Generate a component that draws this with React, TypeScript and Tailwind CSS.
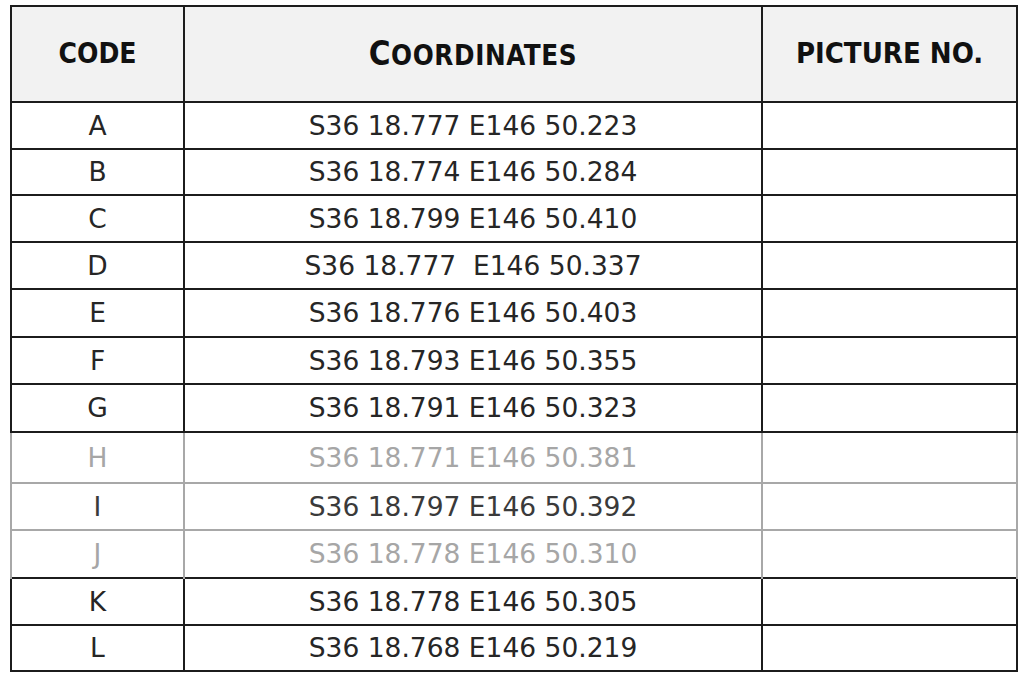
const rows = [
  { code: 'A', coords: 'S36 18.777 E146 50.223', h: 'h-[47px]' },
  { code: 'B', coords: 'S36 18.774 E146 50.284', h: 'h-[46px]' },
  { code: 'C', coords: 'S36 18.799 E146 50.410', h: 'h-[47px]' },
  { code: 'D', coords: 'S36 18.777  E146 50.337', h: 'h-[47px]' },
  { code: 'E', coords: 'S36 18.776 E146 50.403', h: 'h-[48px]' },
  { code: 'F', coords: 'S36 18.793 E146 50.355', h: 'h-[47px]' },
  { code: 'G', coords: 'S36 18.791 E146 50.323', h: 'h-[48px]' },
  { code: 'H', coords: 'S36 18.771 E146 50.381', h: 'h-[51px]', faded: 'light' },
  { code: 'I', coords: 'S36 18.797 E146 50.392', h: 'h-[47px]', faded: 'dark' },
  { code: 'J', coords: 'S36 18.778 E146 50.310', h: 'h-[48px]', faded: 'last' },
  { code: 'K', coords: 'S36 18.778 E146 50.305', h: 'h-[47px]' },
  { code: 'L', coords: 'S36 18.768 E146 50.219', h: 'h-[46px]' },
];

export default function App() {
  return (
    <div className="w-[1024px] h-[678px] bg-white overflow-hidden pt-[5px] pl-[10px]">
      <table className="w-[1006px] border-collapse table-fixed border-2 border-[#1c1c1c] font-['DejaVu_Sans',sans-serif] text-[#262626]">
        <colgroup>
          <col className="w-[173px]" />
          <col className="w-[578px]" />
          <col className="w-[255px]" />
        </colgroup>
        <thead>
          <tr className="h-[96px] bg-[#f2f2f2] font-bold text-[#111] font-stretch-condensed">
            <th className="border-2 border-[#1c1c1c] text-[28px] text-center">CODE</th>
            <th className="border-2 border-[#1c1c1c] text-center tracking-[0.6px]">
              <span className="text-[33px]">C</span>
              <span className="text-[27.5px]">OORDINATES</span>
            </th>
            <th className="border-2 border-[#1c1c1c] text-[29px] text-center">PICTURE NO.</th>
          </tr>
        </thead>
        <tbody>
          {rows.map((r) => {
            const border =
              r.faded === 'last'
                ? 'border-x-2 border-[#a8a8a8]'
                : r.faded
                  ? 'border-x-2 border-b-2 border-[#a8a8a8]'
                  : 'border-2 border-[#1c1c1c]';
            const text =
              r.faded === 'dark' ? 'text-[#3a3a3a]' : r.faded ? 'text-[#a6a6a6]' : '';
            return (
              <tr key={r.code} className={`${r.h} ${text}`}>
                <td className={`${border} text-center text-[26.5px]`}>{r.code}</td>
                <td className={`${border} text-center text-[26.5px] whitespace-pre`}>{r.coords}</td>
                <td className={border}></td>
              </tr>
            );
          })}
        </tbody>
      </table>
    </div>
  );
}
